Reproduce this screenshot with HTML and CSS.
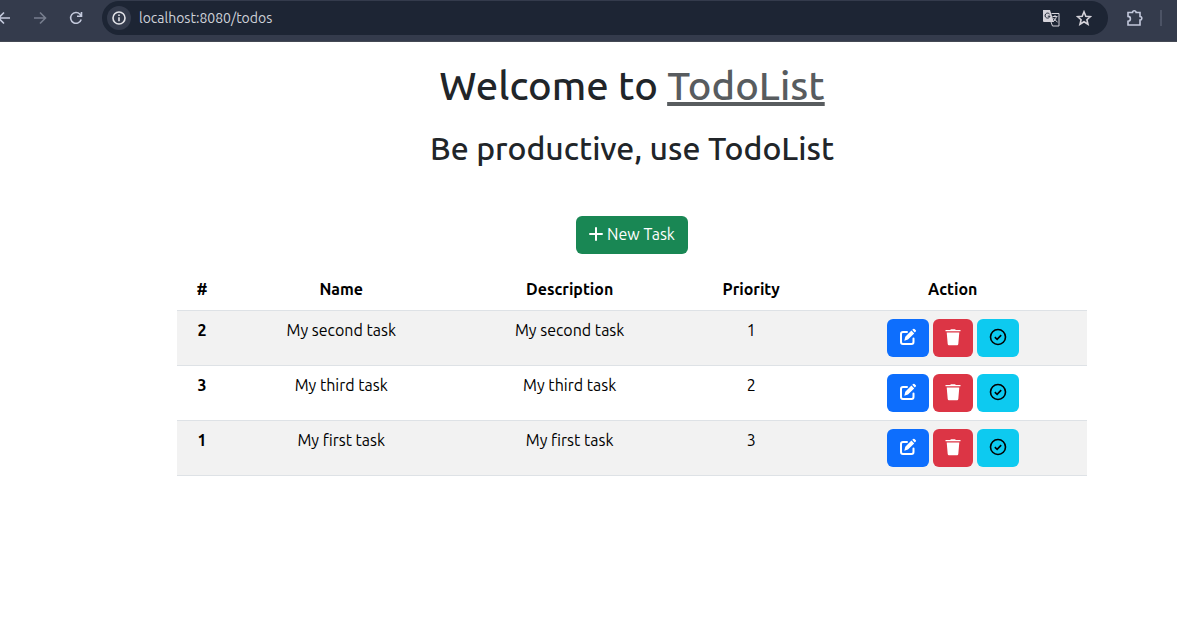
FILE: index.html
```html
<!DOCTYPE html>
<html lang="en">
<head>
<meta charset="utf-8">
<title>TodoList</title>
<link rel="stylesheet" href="styles.css">
</head>
<body>
<svg class="sprite" aria-hidden="true">
  <symbol id="edit" viewBox="0 0 18 18"><path d="M13.200 1.800 14.200 .9q.7-.5 1.300 0l1.300 1.300q.6.6 0 1.300l-1 1zM12.400 2.600l2.800 2.800-6.200 6.200-3.700 1.100 1-4z" fill="currentColor"/><path d="M8 4H4Q2 4 2 6v8q0 2 2 2h8.500q2 0 2-2v-3.500" fill="none" stroke="currentColor" stroke-width="2" stroke-linecap="round"/></symbol>
  <symbol id="trash" viewBox="0 0 16 18"><path d="M.5 3V2h4.600L6 1.200h4l.9.8h4.600v1.300H.5zM1.700 4.500h12.600L13.300 16q-.1 1.200-1.200 1.200H3.900q-1.100 0-1.200-1.200z" fill="currentColor"/></symbol>
  <symbol id="check" viewBox="0 0 18 18"><circle cx="9" cy="9" r="7.500" fill="none" stroke="currentColor" stroke-width="1.600"/><path d="m5.800 9.200 2.300 2.100 4.100-4.200" fill="none" stroke="currentColor" stroke-width="1.600"/></symbol>
</svg>
<header class="browser-bar">
  <nav class="history" aria-label="Browser">
    <button class="icon-button" aria-label="Back"><svg width="16" height="16" viewBox="0 0 16 16"><path d="M14 8H3M8 2.500 2.500 8 8 13.500"/></svg></button>
    <button class="icon-button dim" aria-label="Forward"><svg width="16" height="16" viewBox="0 0 16 16"><path d="M2 8h11M8 2.500 13.500 8 8 13.500"/></svg></button>
    <button class="icon-button" aria-label="Reload"><svg width="16" height="16" viewBox="0 0 16 16"><path d="M13.200 9.500A5.400 5.400 0 1 1 12 4.200L13.500 6M13.500 2v4.300H9"/></svg></button>
  </nav>
  <div class="address-bar">
    <button class="site-info" aria-label="Site information"><svg width="14" height="14" viewBox="0 0 14 14"><circle cx="7" cy="7" r="6"/><path d="M7 6.300v4M7 3.500v1.500"/></svg></button>
    <input class="address" type="text" aria-label="Address" value="localhost:8080/todos">
    <button class="icon-button light" aria-label="Translate"><svg width="18" height="18" viewBox="0 0 18 18"><path class="solid" d="M1 1h7l1 3 3 9H2q-1 0-1-1z"/><path class="cut" d="M7.500 5A2.500 2.500 0 1 0 8 7.200H5.800"/><path class="fine" d="M9.500 4.500H17V17h-6.500L9 13M10.500 7.500h5M13 6v1.500M14.500 7.500q-.8 3.500-3 5M11.500 9q1.500 2.500 4 4"/></svg></button>
    <button class="icon-button light" aria-label="Bookmark"><svg width="16" height="16" viewBox="0 0 16 16"><path d="m8 1.800 1.800 4.400 4.700.4-3.600 3.100 1.100 4.600L8 11.800l-4 2.500 1.100-4.600-3.600-3.100 4.700-.4z"/></svg></button>
  </div>
  <button class="icon-button extensions" aria-label="Extensions"><svg width="18" height="18" viewBox="0 0 18 18"><path d="M2 3.500h4.500a1.800 1.800 0 0 1 3.600 0H14v4a1.800 1.800 0 0 1 0 3.600V16H2v-3.800a2.400 2.400 0 0 0 0-4.800z"/></svg></button>
  <span class="divider"></span>
</header>
<main class="page">
  <h1 class="title">Welcome to <a class="brand" href="#">TodoList</a></h1>
  <h2 class="subtitle">Be productive, use TodoList</h2>
  <button class="button new-task"><svg width="14" height="14" viewBox="0 0 14 14"><path d="M7 1v12M1 7h12" fill="none" stroke="currentColor" stroke-width="2" stroke-linecap="round"/></svg>New Task</button>
  <table class="tasks">
    <colgroup><col class="col-id"><col class="col-text"><col class="col-text"><col class="col-priority"><col></colgroup>
    <thead><tr><th scope="col">#</th><th scope="col">Name</th><th scope="col">Description</th><th scope="col">Priority</th><th scope="col">Action</th></tr></thead>
    <tbody>
      <tr><th scope="row">2</th><td>My second task</td><td>My second task</td><td>1</td><td><div class="actions"><button class="button edit" aria-label="Edit"><svg width="18" height="18"><use href="#edit"/></svg></button><button class="button delete" aria-label="Delete"><svg width="16" height="18"><use href="#trash"/></svg></button><button class="button done" aria-label="Complete"><svg width="18" height="18"><use href="#check"/></svg></button></div></td></tr>
      <tr><th scope="row">3</th><td>My third task</td><td>My third task</td><td>2</td><td><div class="actions"><button class="button edit" aria-label="Edit"><svg width="18" height="18"><use href="#edit"/></svg></button><button class="button delete" aria-label="Delete"><svg width="16" height="18"><use href="#trash"/></svg></button><button class="button done" aria-label="Complete"><svg width="18" height="18"><use href="#check"/></svg></button></div></td></tr>
      <tr><th scope="row">1</th><td>My first task</td><td>My first task</td><td>3</td><td><div class="actions"><button class="button edit" aria-label="Edit"><svg width="18" height="18"><use href="#edit"/></svg></button><button class="button delete" aria-label="Delete"><svg width="16" height="18"><use href="#trash"/></svg></button><button class="button done" aria-label="Complete"><svg width="18" height="18"><use href="#check"/></svg></button></div></td></tr>
    </tbody>
  </table>
</main>
</body>
</html>
```
FILE: styles.css
```css
* { box-sizing: border-box; }
body { margin: 0; background: #fff; color: #212529; font: 16px/24px Ubuntu, "Noto Sans", sans-serif; }
button, input { font: inherit; }
.sprite { display: none; }

.browser-bar { display: flex; align-items: center; height: 42px; padding: 0 15px 6px 0; background: #343b4c; border-bottom: 1px solid #444954; color: #c3c9dc; }
.history { display: flex; gap: 20px; margin-left: -4px; padding-right: 18px; }
.icon-button { display: flex; padding: 0; border: 0; background: none; color: inherit; }
.icon-button svg, .site-info svg { fill: none; stroke: currentColor; stroke-width: 1.6; }
.icon-button .solid { fill: currentColor; stroke: none; }
.icon-button .cut { stroke: #1d2534; stroke-width: 1; }
.icon-button .fine { stroke-width: 1; }
.dim { color: #777e8e; }
.light { color: #d5d3da; }
.address-bar { display: flex; flex: 1; align-items: center; gap: 16px; height: 34px; padding: 0 16px 0 5px; border-radius: 17px; background: #1d2534; }
.site-info { display: flex; align-items: center; justify-content: center; width: 24px; height: 24px; padding: 0; border: 0; border-radius: 50%; background: #343b4c; color: #e3e3e8; }
.address { flex: 1; min-width: 0; margin-left: -8px; padding: 0; border: 0; background: none; color: #cfd2d9; font-size: 14px; }
.extensions { margin-left: 18px; }
.divider { width: 2px; height: 16px; margin-left: 16px; background: #4c5365; }

.page { display: flex; flex-direction: column; align-items: center; padding: 20px 90px 0 177px; }
.title { margin: 0 0 18px; font-size: 40px; line-height: 48px; font-weight: 500; }
.brand { color: #585c5f; }
.subtitle { margin: 0 0 48px; font-size: 32px; line-height: 40px; font-weight: 500; }
.button { display: flex; align-items: center; justify-content: center; height: 38px; padding: 0 12px; border: 0; border-radius: 6px; color: #fff; }
.new-task { gap: 4px; margin-bottom: 16px; padding: 0 13px 2px; background: #198754; }
.edit { background: #0d6efd; }
.delete { background: #dc3545; }
.done { background: #0dcaf0; color: #000; }

.tasks { width: 100%; table-layout: fixed; border-collapse: collapse; color: #000; line-height: 22px; text-align: center; }
.col-id { width: 5.5%; }
.col-text { width: 25.1%; }
.col-priority { width: 14.8%; }
.tasks th, .tasks td { padding: 8px; border-bottom: 1px solid #dee2e6; vertical-align: top; }
.tasks th { font-weight: 700; }
.tasks thead th { padding-bottom: 10px; }
.tasks tbody tr:nth-child(odd) { background: #f2f2f2; }
.actions { display: flex; justify-content: center; gap: 4px; }
.actions .button { padding-bottom: 2px; }
```
